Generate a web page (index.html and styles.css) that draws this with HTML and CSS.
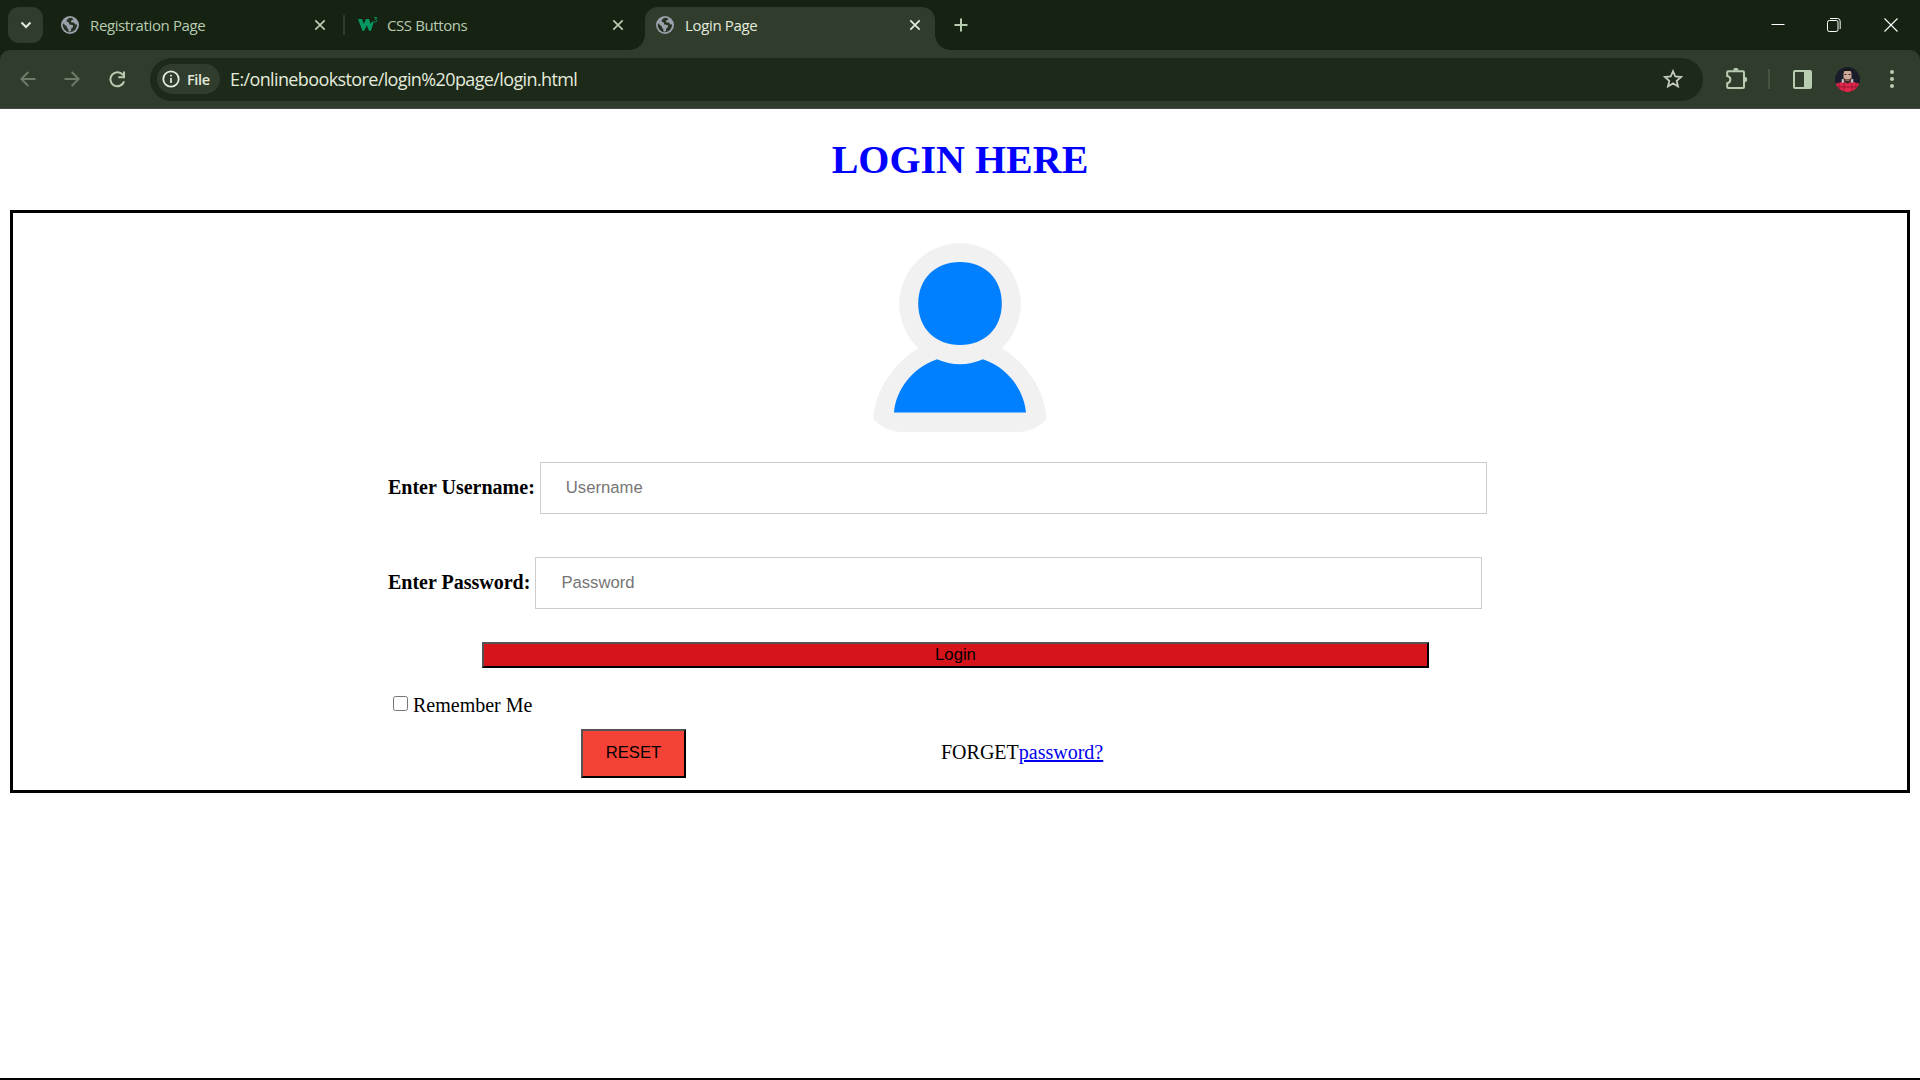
FILE: index.html
```html
<!DOCTYPE html>
<html lang="en">
<head>
<meta charset="utf-8">
<title>Login Page</title>
<link rel="stylesheet" href="styles.css">
</head>
<body>
<svg class="defs" width="0" height="0" aria-hidden="true">
  <symbol id="globe" viewBox="0 0 18 18">
    <circle cx="9" cy="9" r="9" fill="#9ca0aa"/>
    <path d="M8.3 1.9C7 2.5 5.500 3.500 5.600 4.900c.1 1.200 1.600.9 2.200 1.500.5.6-.1 1.500.6 2 .9.6 2.100.1 3 .6.8.5.7 1.500.5 2.100-.2.700-1.300.600-1.600 1.300-.3.800.100 1.900-.5 2.600-.5.6-1.500.9-2.300.7v-1.900c0-.900-.9-1-1.300-1.700-.3-.500 0-1.200-.4-1.700L2 7.200A7.200 7.200 0 0 0 9 16.200 7.200 7.200 0 0 0 16 8.200c-.5.300-1.200.500-1.800.1-.6-.3-.5-1.200-1.100-1.500-.8-.5-2 .1-2.700-.5-.5-.5-.3-1.500.2-2 .5-.4 1.300-.2 1.700-.7L11.800 2.400A7.200 7.200 0 0 0 8.300 1.900z" class="land"/>
  </symbol>
  <symbol id="cross" viewBox="0 0 12 12"><path d="M1.300 1.300l9.400 9.400M10.700 1.300l-9.400 9.400" fill="none" stroke="currentColor" stroke-width="1.700"/></symbol>
</svg>
<header class="browser">
  <div class="tabstrip">
    <div class="tab-search"><svg width="12" height="8" viewBox="0 0 12 8"><path d="M1.500 1.500L6 6l4.500-4.500" fill="none" stroke="#e4ebdd" stroke-width="2"/></svg></div>
    <div class="tab first">
      <svg class="favicon" width="18" height="18"><use href="#globe"/></svg>
      <span class="tab-title t-reg">Registration Page</span>
      <svg class="close" width="12" height="12"><use href="#cross"/></svg>
    </div>
    <div class="tab-sep"></div>
    <div class="tab second">
      <svg class="favicon w3" width="21" height="18" viewBox="0 0 21 18"><path d="M0 3h4l1.800 5L8 3h3l1.500 5L14 5.500l1.800.5L12.800 15h-1.500L8.700 9.500 6 15H4.500z" fill="#059862"/><path d="M16 1.600h2.800L17.300 3.500c2.200 0 2.100 2.700-.2 2.500q-.9 0-1.300-.8" fill="none" stroke="#059862" stroke-width="1"/></svg>
      <span class="tab-title t-css">CSS Buttons</span>
      <svg class="close" width="12" height="12"><use href="#cross"/></svg>
    </div>
    <div class="tab active">
      <svg class="favicon" width="18" height="18"><use href="#globe"/></svg>
      <span class="tab-title t-login">Login Page</span>
      <svg class="close" width="12" height="12"><use href="#cross"/></svg>
    </div>
    <svg class="plus" width="14" height="14" viewBox="0 0 14 14"><path d="M7 .5v13M.5 7h13" stroke="#b8ccb0" stroke-width="2"/></svg>
    <div class="window-controls">
      <svg width="14" height="14" viewBox="0 0 14 14"><path d="M.5 6.500h13" stroke="#fff"/></svg>
      <svg width="14" height="14" viewBox="0 0 14 14" fill="none" stroke="#fff"><rect x=".5" y="2.500" width="10.500" height="11" rx="1.800"/><path d="M3 .5h7.500q2.700 0 2.700 2.800V11"/></svg>
      <svg width="14" height="14" viewBox="0 0 14 14"><path d="M.5.5l13 13M13.500.5l-13 13" stroke="#fff" stroke-width="1.100"/></svg>
    </div>
  </div>
  <div class="toolbar">
    <svg class="nav-icon back" width="16" height="16" viewBox="0 0 16 16"><path d="M15.500 8H1.800M8.300 1L1.300 8l7 7" fill="none" stroke="#6e7b69" stroke-width="1.900"/></svg>
    <svg class="nav-icon forward" width="16" height="16" viewBox="0 0 16 16"><path d="M.5 8h13.700M7.700 1l7 7-7 7" fill="none" stroke="#6e7b69" stroke-width="1.900"/></svg>
    <svg class="nav-icon reload" width="17" height="17" viewBox="0 0 17 17"><path d="M14.200 4.300A7 7 0 1 0 15.100 10.400" fill="none" stroke="#b8ccb0" stroke-width="2"/><path d="M15 .5V6.300H9.300" fill="none" stroke="#b8ccb0" stroke-width="2"/></svg>
    <div class="omnibox">
      <div class="chip">
        <svg width="18" height="18" viewBox="0 0 18 18"><circle cx="9" cy="9" r="7.700" fill="none" stroke="#e4ebdd" stroke-width="1.800"/><path d="M9 8v5M9 4.800v1.800" stroke="#e4ebdd" stroke-width="1.700"/></svg>
        <span class="chip-text">File</span>
      </div>
      <span class="url">E:/onlinebookstore/login%20page/login.html</span>
      <svg class="star" width="20" height="20" viewBox="0 0 20 20"><path d="M10 2.200l2.300 5.300 5.800.5-4.400 3.800 1.300 5.600-5-3-5 3 1.300-5.600L1.900 8l5.800-.5z" fill="none" stroke="#c5c9c0" stroke-width="1.800"/></svg>
    </div>
    <svg class="puzzle" width="22" height="22" viewBox="0 0 22 22"><path d="M2.200 3.200H17q1 0 1 1V19q0 1-1 1H2.200q-1 0-1-1V15.200c4.200-.5 4.200-6.700 0-7.200V4.200q0-1 1-1z" fill="none" stroke="#b8ccb0" stroke-width="2"/><path d="M7.200 2.500a2.700 2.700 0 0 1 5.400 0zM18.500 8.800a2.700 2.700 0 0 1 0 5.400z" fill="#b8ccb0"/></svg>
    <div class="tool-sep"></div>
    <svg class="panel" width="19" height="19" viewBox="0 0 19 19"><rect x="1" y="1" width="17" height="17" rx="1" fill="none" stroke="#b8ccb0" stroke-width="2"/><path d="M11 1h7v17h-7z" fill="#b8ccb0"/></svg>
    <svg class="profile" width="25" height="25" viewBox="0 0 25 25">
      <clipPath id="round"><circle cx="12.500" cy="12.500" r="12.500"/></clipPath>
      <g clip-path="url(#round)"><path d="M0 0h25v25H0z" fill="#191d29"/><path d="M0 17l8-2.500h9l8 2.500v8H0z" fill="#e0284c"/><path d="M4 16v9M9 16v9M17 16v9M21 16v9M0 20h25" stroke="#8e1531" stroke-width=".8"/><path d="M6.500 12.500L9 11.500V15l-2 1zM18.500 12.500L16 11.500V15l2 1z" fill="#b9c6cc"/><path d="M8.500 4.500q4-3.500 8 0V12q-1 4-4 4t-4-4z" fill="#cfa896"/><path d="M8 6.500q-.5-5.500 4.500-5.500T17 6.500L15.500 4h-6z" fill="#171619"/><path d="M8.500 10q0 6.500 4 6.500t4-6.500L15 12.200h-5z" fill="#3b2827"/><path d="M10.500 13.200h4" stroke="#cfa896" stroke-width=".8"/><path d="M9.500 7.500h2M13.500 7.500h2" stroke="#251e20"/></g>
    </svg>
    <svg class="dots" width="6" height="20" viewBox="0 0 6 20" fill="#b8ccb0"><circle cx="3" cy="3" r="2"/><circle cx="3" cy="10" r="2"/><circle cx="3" cy="17" r="2"/></svg>
  </div>
</header>
<main class="page">
  <h1 class="heading">LOGIN HERE</h1>
  <form class="login-box">
    <svg class="avatar" width="174" height="190" viewBox="0 0 174 190">
      <path d="M87 0a61 61 0 0 1 42 105c25 16 43.500 43 44.500 71q-10 12-27 13H27Q11 188 .5 176c1-28 19.500-55 44.500-71A61 61 0 0 1 87 0z" fill="#f1f1f1"/>
      <path d="M87 19c25 0 41.800 17 41.800 41.500S112 102 87 102 45.200 85 45.200 60.500 62 19 87 19z" fill="#0080ff"/>
      <path d="M64 116.300q23 10 46 0c24 8 41 30 43 53.200H21C23 146.300 40 124.300 64 116.300z" fill="#0080ff"/>
    </svg>
    <div class="field"><label class="label" for="user">Enter Username:</label><input class="text-input" id="user" type="text" placeholder="Username"></div>
    <div class="field"><label class="label" for="pass">Enter Password:</label><input class="text-input" id="pass" type="password" placeholder="Password"></div>
    <button class="login" type="button">Login</button>
    <label class="remember"><input class="check" type="checkbox"><span>Remember Me</span></label>
    <div class="actions">
      <button class="reset" type="reset">RESET</button>
      <span class="forget">FORGET<a href="#">password?</a></span>
    </div>
  </form>
</main>
</body>
</html>
```
FILE: styles.css
```css
* { box-sizing: border-box; }
body {
  margin: 0;
  height: 1080px;
  display: flex;
  flex-direction: column;
  overflow: hidden;
  background: #fff;
  border-bottom: 2px solid #000;
  font: 20px/23px "Liberation Serif", serif;
}
svg { display: block; flex: none; }
.defs { position: absolute; }
.land { fill: #263323; }

.browser {
  flex: none;
  height: 109px;
  background: #162313;
  font-family: "Open Sans", "Noto Sans", sans-serif;
}
.tabstrip { height: 50px; display: flex; align-items: center; padding-left: 8px; }
.tab-search {
  width: 35px; height: 36px;
  border-radius: 11px;
  background: #303d2d;
  display: grid;
  place-items: center;
}
.tab { display: flex; align-items: center; color: #b8ccb0; }
.tab.first { width: 283px; margin-left: 18px; padding-right: 18px; }
.tab-sep { width: 2px; height: 20px; background: #303d2d; margin-left: -1px; }
.tab.second { width: 300px; padding: 0 21px 0 13px; }
.tab.active {
  position: relative;
  align-self: flex-end;
  width: 290px; height: 43px;
  padding: 0 14px 7px 11px;
  border-radius: 13px 13px 0 0;
  background: #303d2d;
  color: #e4ebdd;
}
.tab.active::before, .tab.active::after {
  content: "";
  position: absolute;
  bottom: 0;
  width: 15px; height: 15px;
}
.tab.active::before { left: -15px; background: radial-gradient(circle at 0 0, transparent 14.5px, #303d2d 15px); }
.tab.active::after { right: -15px; background: radial-gradient(circle at 100% 0, transparent 14.5px, #303d2d 15px); }
.tab-title { font-size: 15px; line-height: 20px; margin-left: 11px; white-space: nowrap; }
.w3 + .tab-title { margin-left: 8px; }
.t-reg { letter-spacing: -0.38px; }
.t-css { letter-spacing: -0.4px; }
.t-login { letter-spacing: -0.35px; }
.close { margin-left: auto; }
.plus { margin-left: 19px; }
.window-controls { margin-left: auto; margin-right: 22px; display: flex; gap: 43px; }
.window-controls svg:first-child { margin-right: -1px; }

.toolbar {
  height: 59px;
  display: flex;
  align-items: center;
  padding: 0 25px 0 20px;
  background: #303d2d;
  border-bottom: 1px solid #464c44;
  border-radius: 10px 10px 0 0;
}
.forward { margin-left: 28px; }
.reload { margin-left: 29px; }
.omnibox {
  width: 1553px; height: 43px;
  margin-left: 24px;
  padding: 0 20px 0 7px;
  border-radius: 22px;
  background: #1d2919;
  display: flex;
  align-items: center;
}
.chip {
  width: 63px; height: 30px;
  padding-left: 5px;
  border-radius: 15px;
  background: #303d2d;
  display: flex;
  align-items: center;
}
.chip-text { margin-left: 7px; font-size: 14.5px; font-weight: 600; letter-spacing: -0.35px; color: #e4ebdd; }
.url { margin-left: 10px; font-size: 18px; letter-spacing: -0.62px; color: #e4ebdd; white-space: nowrap; }
.star { margin-left: auto; }
.puzzle { margin-left: 23px; }
.tool-sep { width: 2px; height: 20px; margin-left: 20px; background: #465442; }
.panel { margin-left: 23px; }
.profile { margin-left: 23px; }
.dots { margin-left: auto; }

.page { padding: 0 10px; }
.heading { margin: 28px 0 27px; font-size: 40px; line-height: 46px; text-align: center; color: #00f; }
.login-box {
  height: 583px;
  border: 3px solid #000;
  padding: 30px 375px 0;
  display: flex;
  flex-direction: column;
}
.avatar { align-self: center; margin-bottom: 29px; }
.field { display: flex; align-items: center; gap: 5px; margin-bottom: 43px; }
.label { font-weight: bold; white-space: nowrap; padding-bottom: 1px; }
.text-input {
  flex: none;
  width: 947px; height: 52px;
  padding: 0 25px;
  border: 1px solid #ccc;
  font: 16.67px "Liberation Sans", sans-serif;
}
.text-input::placeholder { color: #757575; }
.login, .reset { border: 2px outset #000; padding: 0; font: 16.67px "Liberation Sans", sans-serif; color: #000; }
.login {
  width: 947px; height: 26px;
  margin: -10px 0 0 94px;
  background: #d5141b;
}
.remember { display: flex; align-items: center; margin-top: 26px; height: 23px; }
.check { width: 15px; height: 15px; margin: 0 5px 4px; }
.actions { display: flex; align-items: center; margin: 12px 0 0 193px; }
.reset { width: 105px; height: 49px; padding-bottom: 2px; background: #f44336; }
.forget { margin-left: 255px; padding-bottom: 3px; }
.forget a { color: #00e; }
```
